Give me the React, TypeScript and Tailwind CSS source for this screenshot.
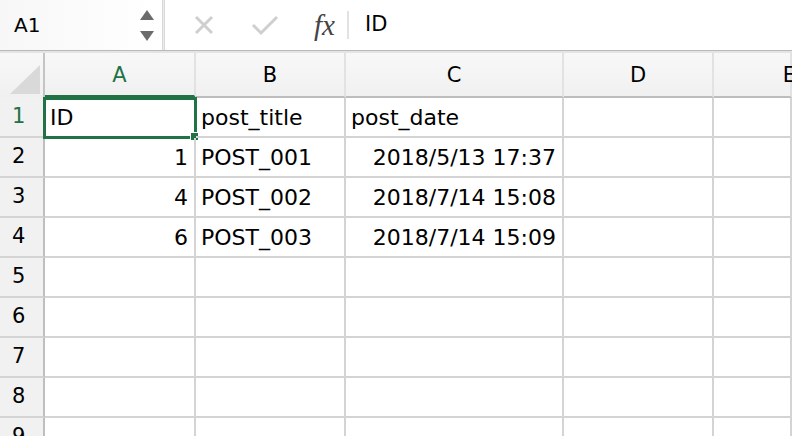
import type { ReactNode } from 'react'

const FONT = '"DejaVu Sans", "Noto Sans CJK JP", "Liberation Sans", sans-serif'

const columns = [
  { key: 'A', width: 'w-[151px]' },
  { key: 'B', width: 'w-[150px]' },
  { key: 'C', width: 'w-[218px]' },
  { key: 'D', width: 'w-[150px]' },
  { key: 'E', width: 'flex-1' },
]

type Cell = { text: string; align?: 'left' | 'right' }

const rows: Cell[][] = [
  [{ text: 'ID' }, { text: 'post_title' }, { text: 'post_date' }],
  [{ text: '1', align: 'right' }, { text: 'POST_001' }, { text: '2018/5/13 17:37', align: 'right' }],
  [{ text: '4', align: 'right' }, { text: 'POST_002' }, { text: '2018/7/14 15:08', align: 'right' }],
  [{ text: '6', align: 'right' }, { text: 'POST_003' }, { text: '2018/7/14 15:09', align: 'right' }],
  [],
  [],
  [],
  [],
  [],
]

function FormulaBar() {
  return (
    <div className="flex h-[51px] items-stretch border-b border-[#b9b9b9] bg-white">
      <div className="flex w-[162px] items-center justify-between bg-gradient-to-r from-[#f7f7f7] to-white pl-[14px] pr-[8px]">
        <span className="text-[20px] text-black">A1</span>
        <div className="flex flex-col items-center gap-[11px]">
          <svg width="14" height="10" viewBox="0 0 14 10">
            <path d="M7 0 L14 10 L0 10 Z" fill="#6b6b6b" />
          </svg>
          <svg width="14" height="10" viewBox="0 0 14 10">
            <path d="M0 0 L14 0 L7 10 Z" fill="#6b6b6b" />
          </svg>
        </div>
      </div>
      <div className="w-[3px] border-x border-[#d8d8d8] bg-[#ececec]" />
      <div className="flex flex-1 items-center">
        <svg className="ml-[28px]" width="22" height="22" viewBox="0 0 22 22">
          <path d="M3 3 L19 19 M19 3 L3 19" stroke="#cfcfcf" strokeWidth="3" />
        </svg>
        <svg className="ml-[36px]" width="28" height="22" viewBox="0 0 28 22">
          <path d="M2 11 L10 19 L26 3" stroke="#cfcfcf" strokeWidth="3" fill="none" />
        </svg>
        <span className="ml-[35px] text-[29px] italic leading-none text-[#444] [font-family:'Liberation_Serif',serif]">fx</span>
        <div className="ml-[12px] h-[28px] w-[2px] bg-[#e2e2e2]" />
        <span className="ml-[16px] text-[21px] text-black">ID</span>
      </div>
    </div>
  )
}

function HeaderRow() {
  return (
    <div className="flex h-[47px] border-t-2 border-[#e4e4e4] bg-gradient-to-b from-[#f8f8f8] to-[#f0f0f0]">
      <div className="relative w-[45px] border-r-2 border-[#c4c4c4]">
        <svg className="absolute left-[10px] top-[12px]" width="30" height="29" viewBox="0 0 30 29">
          <path d="M30 0 L30 29 L0 29 Z" fill="#d9d9d9" />
        </svg>
      </div>
      {columns.map((c) => (
        <div
          key={c.key}
          className={`${c.width} flex items-center justify-center border-r-2 border-[#e2e2e2] text-[21px] ${
            c.key === 'A' ? 'border-b-[3px] border-b-[#217346] text-[#217346]' : 'border-b-2 border-b-[#bdbdbd] text-black'
          } ${c.key === 'E' ? 'justify-end pr-0' : ''}`}
        >
          <span className={c.key === 'E' ? 'mr-[-6px] pt-[3px]' : 'pt-[3px]'}>{c.key}</span>
        </div>
      ))}
    </div>
  )
}

function GridCell({ cell, width, children }: { cell?: Cell; width: string; children?: ReactNode }) {
  return (
    <div
      className={`${width} relative flex items-center overflow-visible whitespace-nowrap border-r-2 border-b-2 border-[#d4d4d4] pl-[5px] pr-[6px] text-[22px] text-black ${
        cell?.align === 'right' ? 'justify-end' : 'justify-start'
      }`}
    >
      {cell?.text}
      {children}
    </div>
  )
}

export default function App() {
  return (
    <div className="h-[436px] w-[792px] overflow-hidden bg-white" style={{ fontFamily: FONT }}>
      <FormulaBar />
      <HeaderRow />
      {rows.map((row, i) => (
        <div key={i} className="flex h-[40px]">
          <div
            className={`flex w-[45px] items-center border-r-2 border-b-2 border-r-[#bfbfbf] border-b-[#d4d4d4] bg-[#f1f1f1] pl-[12px] text-[21px] ${
              i === 0 ? 'text-[#217346]' : 'text-black'
            }`}
          >
            {i + 1}
          </div>
          {columns.map((c, j) => (
            <GridCell key={c.key} cell={row[j]} width={c.width}>
              {i === 0 && j === 0 && (
                <>
                  <div className="pointer-events-none absolute left-[-2px] top-[-1px] right-[-3px] bottom-[-3px] border-[3px] border-[#217346]" />
                  <div className="absolute right-[-5px] bottom-[-5px] h-[9px] w-[9px] border border-white bg-[#217346]" />
                </>
              )}
            </GridCell>
          ))}
        </div>
      ))}
    </div>
  )
}
